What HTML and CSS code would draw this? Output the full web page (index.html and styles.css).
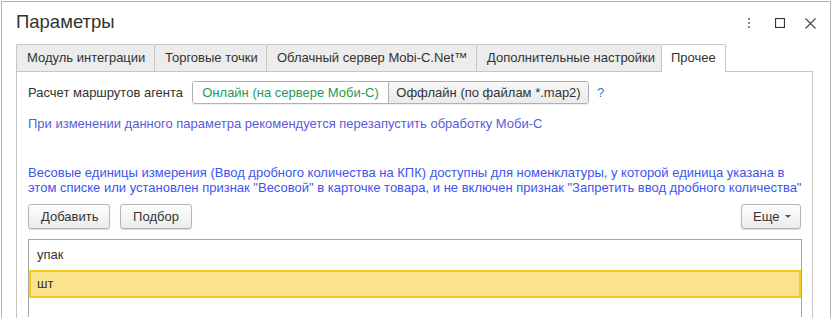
FILE: index.html
```html
<!DOCTYPE html>
<html lang="ru">
<head>
    <meta charset="utf-8">
    <title>Параметры</title>
    <link rel="stylesheet" href="styles.css">
</head>

<body>

    <div class="window">
        <div class="header">
            <h1 class="title">Параметры</h1>
            <div class="header-tools">
                <span class="tool">
                    <svg width="4" height="12" viewBox="0 0 4 12"><rect x="1" y="1" width="2" height="2" fill="#888"/><rect x="1" y="5" width="2" height="2" fill="#888"/><rect x="1" y="9" width="2" height="2" fill="#888"/></svg>
                </span>
                <span class="tool">
                    <svg width="10" height="10" viewBox="0 0 10 10"><rect x="0.5" y="0.5" width="9" height="9" fill="none" stroke="#333" stroke-width="1.2"/></svg>
                </span>
                <span class="tool">
                    <svg width="11" height="11" viewBox="0 0 11 11"><path d="M0.5 0.5 L10.5 10.5 M10.5 0.5 L0.5 10.5" stroke="#444" stroke-width="1.1"/></svg>
                </span>
            </div>
        </div>

        <div class="tabs">
            <div class="tab">Модуль интеграции</div>
            <div class="tab">Торговые точки</div>
            <div class="tab">Облачный сервер Mobi-C.Net™</div>
            <div class="tab">Дополнительные настройки</div>
            <div class="tab active">Прочее</div>
        </div>

        <div class="panel">
            <div class="form-row">
                <span class="label">Расчет маршрутов агента</span>
                <div class="toggle">
                    <span class="toggle-item selected">Онлайн (на сервере Моби-С)</span>
                    <span class="toggle-item">Оффлайн (по файлам *.map2)</span>
                </div>
                <span class="help">?</span>
            </div>

            <div class="note">При изменении данного параметра рекомендуется перезапустить обработку Моби-С</div>

            <div class="hint">Весовые единицы измерения (Ввод дробного количества на КПК) доступны для номенклатуры, у которой единица указана в этом списке или установлен признак "Весовой" в карточке товара, и не включен признак "Запретить ввод дробного количества"</div>

            <div class="toolbar">
                <button class="button">Добавить</button>
                <button class="button">Подбор</button>
                <button class="button more">Еще <span class="caret"></span></button>
            </div>

            <div class="list">
                <div class="list-row">упак</div>
                <div class="list-row current">шт</div>
                <div class="list-row"></div>
            </div>
        </div>
    </div>

</body>
</html>
```

FILE: styles.css
```css
body {
    font-family: 'Liberation Sans', Arial, sans-serif;
    font-size: 13px;
    color: #333;
    background-color: #fff;
    margin: 0;
    padding: 1px 0 0 1px;
    overflow: hidden;
}

.window {
    width: 830px;
    height: 317px;
    border: 1px solid #b4b4b4;
    border-bottom: none;
    padding: 0 17px 0 14px;
    box-sizing: border-box;
    overflow: hidden;
}

.header {
    display: flex;
    align-items: center;
    height: 42px;
}

.title {
    flex: 1;
    margin: 0;
    font-size: 18.5px;
    font-weight: normal;
    color: #333;
    padding-bottom: 2px;
}

.header-tools {
    display: flex;
    align-items: center;
    margin-right: -13px;
}

.tool {
    display: flex;
    align-items: center;
    justify-content: center;
    width: 31px;
    height: 20px;
}

.tabs {
    display: flex;
    height: 27px;
}

.tab {
    height: 27px;
    line-height: 26px;
    padding: 0 10px;
    background-color: #ececec;
    border: 1px solid #c6c6c6;
    border-bottom: none;
    border-right: none;
    border-radius: 2px 2px 0 0;
    box-sizing: border-box;
    color: #333;
    white-space: nowrap;
}

.tab:nth-child(1) { width: 138px; }
.tab:nth-child(2) { width: 112px; }
.tab:nth-child(3) { width: 210px; }
.tab:nth-child(4) { width: 185px; }

.tab.active {
    width: 65px;
    background-color: #fff;
    border-right: 1px solid #c6c6c6;
    height: 28px;
    position: relative;
    z-index: 1;
    padding: 0 9px;
}

.panel {
    border: 1px solid #c6c6c6;
    border-bottom: none;
    height: 247px;
    box-sizing: border-box;
    padding: 9px 10px 0 11px;
}

.form-row {
    display: flex;
    align-items: center;
    height: 23px;
}

.label {
    width: 164px;
}

.toggle {
    display: flex;
    height: 23px;
    border: 1px solid #b0b0b0;
    border-radius: 3px;
    box-sizing: border-box;
    overflow: hidden;
    box-shadow: 0 1px 1px rgba(0, 0, 0, 0.08);
}

.toggle-item {
    display: flex;
    align-items: center;
    justify-content: center;
    background: linear-gradient(#f7f7f7, #ebebeb);
    color: #333;
    width: 199px;
}

.toggle-item.selected {
    background: #fff;
    color: #1f9a53;
    width: 195px;
    border-right: 1px solid #b0b0b0;
}

.help {
    color: #2f7ad0;
    margin-left: 8px;
}

.note {
    color: #5a5cd8;
    margin-top: 12px;
    line-height: 15px;
}

.hint {
    color: #3b55f0;
    margin-top: 34px;
    line-height: 15px;
    width: 780px;
}

.toolbar {
    display: flex;
    gap: 10px;
    margin-top: 9px;
    height: 25px;
}

.button {
    font-family: inherit;
    font-size: 13px;
    color: #333;
    height: 25px;
    padding: 0 12px;
    background: linear-gradient(#fdfdfd, #ececec);
    border: 1px solid #b4b4b4;
    border-radius: 3px;
    box-shadow: 0 1px 1px rgba(0, 0, 0, 0.15);
    cursor: pointer;
}

.button:nth-child(1) { width: 82px; }
.button:nth-child(2) { width: 72px; }

.button.more {
    margin-left: auto;
    margin-right: 1px;
    width: 60px;
    padding: 0 6px 0 11px;
    display: flex;
    align-items: center;
    gap: 6px;
}

.caret {
    width: 0;
    height: 0;
    border-left: 3px solid transparent;
    border-right: 3px solid transparent;
    border-top: 3px solid #555;
}

.list {
    margin-top: 10px;
    border: 1px solid #a6a6a6;
    border-bottom: none;
    height: 78px;
    box-sizing: border-box;
}

.list-row {
    height: 30px;
    line-height: 30px;
    padding-left: 8px;
    box-sizing: border-box;
}

.list-row.current {
    height: 28px;
    line-height: 24px;
    background-color: #fce48f;
    border: 2px solid #f6c91e;
    padding-left: 6px;
}
```
